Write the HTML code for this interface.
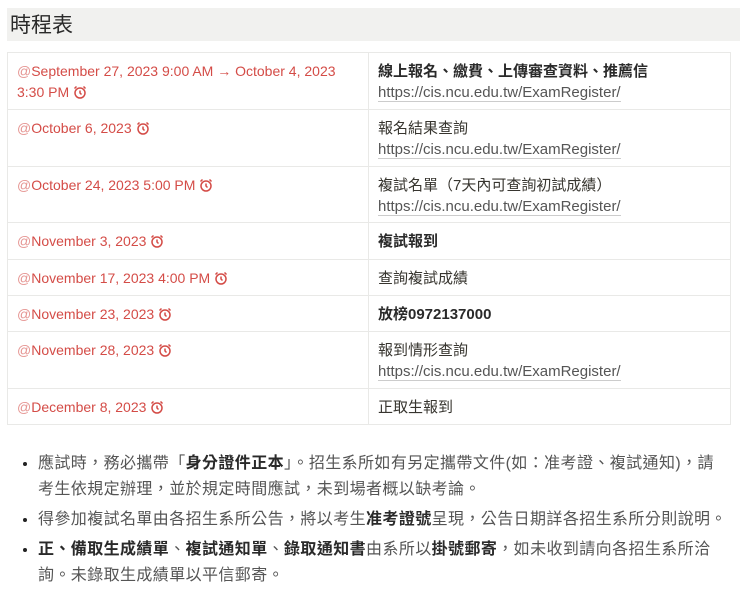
<!DOCTYPE html>
<html><head><meta charset="utf-8"><style>
body{margin:0;background:#fff;font-family:"Liberation Sans","Noto Sans CJK TC",sans-serif;color:#37352f;width:740px;height:595px;overflow:hidden;position:relative}
.h{position:absolute;left:7px;top:8px;width:733px;height:33px;background:#f1f1ef;font-size:21px;line-height:35px;padding-left:3px;box-sizing:border-box;color:#2a2a2a}
table{position:absolute;left:7px;top:52px;border-collapse:collapse;font-size:14px}
td{border:1px solid #e9e9e7;vertical-align:top;padding:8px 9px 0 9px;line-height:21px;box-sizing:border-box}
td.d{width:361px;color:#d44c47}
td.r{width:362px;font-size:15px}
.at{opacity:.6}
a{color:#555;text-decoration:none;border-bottom:1px solid #ccc}
b{font-weight:bold;color:#2a2a2a}
svg{vertical-align:-2px}
ul{position:absolute;left:0;top:451px;margin:0;padding:0 0 0 38px;width:696px;font-size:16px;letter-spacing:0.4px;line-height:26px;color:#555}
li{margin-bottom:4px}
li::marker{color:#222}
</style></head><body>
<div class="h">時程表</div>
<table>
<tr style="height:57px"><td class="d"><span class="at">@</span>September 27, 2023 9:00 AM → October 4, 2023 3:30 PM <svg width="14" height="14" viewBox="0 0 14 14" fill="none" stroke="#d44c47" stroke-width="1.5"><circle cx="7" cy="8" r="5"/><path d="M7 5.5V8l1.5 1.5M1.5 3.5L3.5 1.5M12.5 3.5L10.5 1.5"/></svg></td><td class="r"><b>線上報名、繳費、上傳審查資料、推薦信</b><br><a>https://cis.ncu.edu.tw/ExamRegister/</a></td></tr>
<tr style="height:57px"><td class="d"><span class="at">@</span>October 6, 2023 <svg width="14" height="14" viewBox="0 0 14 14" fill="none" stroke="#d44c47" stroke-width="1.5"><circle cx="7" cy="8" r="5"/><path d="M7 5.5V8l1.5 1.5M1.5 3.5L3.5 1.5M12.5 3.5L10.5 1.5"/></svg></td><td class="r">報名結果查詢<br><a>https://cis.ncu.edu.tw/ExamRegister/</a></td></tr>
<tr style="height:56px"><td class="d"><span class="at">@</span>October 24, 2023 5:00 PM <svg width="14" height="14" viewBox="0 0 14 14" fill="none" stroke="#d44c47" stroke-width="1.5"><circle cx="7" cy="8" r="5"/><path d="M7 5.5V8l1.5 1.5M1.5 3.5L3.5 1.5M12.5 3.5L10.5 1.5"/></svg></td><td class="r">複試名單（7天內可查詢初試成績）<br><a>https://cis.ncu.edu.tw/ExamRegister/</a></td></tr>
<tr style="height:37px"><td class="d"><span class="at">@</span>November 3, 2023 <svg width="14" height="14" viewBox="0 0 14 14" fill="none" stroke="#d44c47" stroke-width="1.5"><circle cx="7" cy="8" r="5"/><path d="M7 5.5V8l1.5 1.5M1.5 3.5L3.5 1.5M12.5 3.5L10.5 1.5"/></svg></td><td class="r"><b>複試報到</b></td></tr>
<tr style="height:36px"><td class="d"><span class="at">@</span>November 17, 2023 4:00 PM <svg width="14" height="14" viewBox="0 0 14 14" fill="none" stroke="#d44c47" stroke-width="1.5"><circle cx="7" cy="8" r="5"/><path d="M7 5.5V8l1.5 1.5M1.5 3.5L3.5 1.5M12.5 3.5L10.5 1.5"/></svg></td><td class="r">查詢複試成績</td></tr>
<tr style="height:36px"><td class="d"><span class="at">@</span>November 23, 2023 <svg width="14" height="14" viewBox="0 0 14 14" fill="none" stroke="#d44c47" stroke-width="1.5"><circle cx="7" cy="8" r="5"/><path d="M7 5.5V8l1.5 1.5M1.5 3.5L3.5 1.5M12.5 3.5L10.5 1.5"/></svg></td><td class="r"><b>放榜0972137000</b></td></tr>
<tr style="height:57px"><td class="d"><span class="at">@</span>November 28, 2023 <svg width="14" height="14" viewBox="0 0 14 14" fill="none" stroke="#d44c47" stroke-width="1.5"><circle cx="7" cy="8" r="5"/><path d="M7 5.5V8l1.5 1.5M1.5 3.5L3.5 1.5M12.5 3.5L10.5 1.5"/></svg></td><td class="r">報到情形查詢<br><a>https://cis.ncu.edu.tw/ExamRegister/</a></td></tr>
<tr style="height:36px"><td class="d"><span class="at">@</span>December 8, 2023 <svg width="14" height="14" viewBox="0 0 14 14" fill="none" stroke="#d44c47" stroke-width="1.5"><circle cx="7" cy="8" r="5"/><path d="M7 5.5V8l1.5 1.5M1.5 3.5L3.5 1.5M12.5 3.5L10.5 1.5"/></svg></td><td class="r">正取生報到</td></tr>
</table>
<ul>
<li>應試時，務必攜帶「<b>身分證件正本</b>」。招生系所如有另定攜帶文件(如：准考證、複試通知)，請<br>考生依規定辦理，並於規定時間應試，未到場者概以缺考論。</li>
<li>得參加複試名單由各招生系所公告，將以考生<b>准考證號</b>呈現，公告日期詳各招生系所分則說明。</li>
<li><b>正、備取生成績單</b>、<b>複試通知單</b>、<b>錄取通知書</b>由系所以<b>掛號郵寄</b>，如未收到請向各招生系所洽<br>詢。未錄取生成績單以平信郵寄。</li>
</ul>
</body></html>
